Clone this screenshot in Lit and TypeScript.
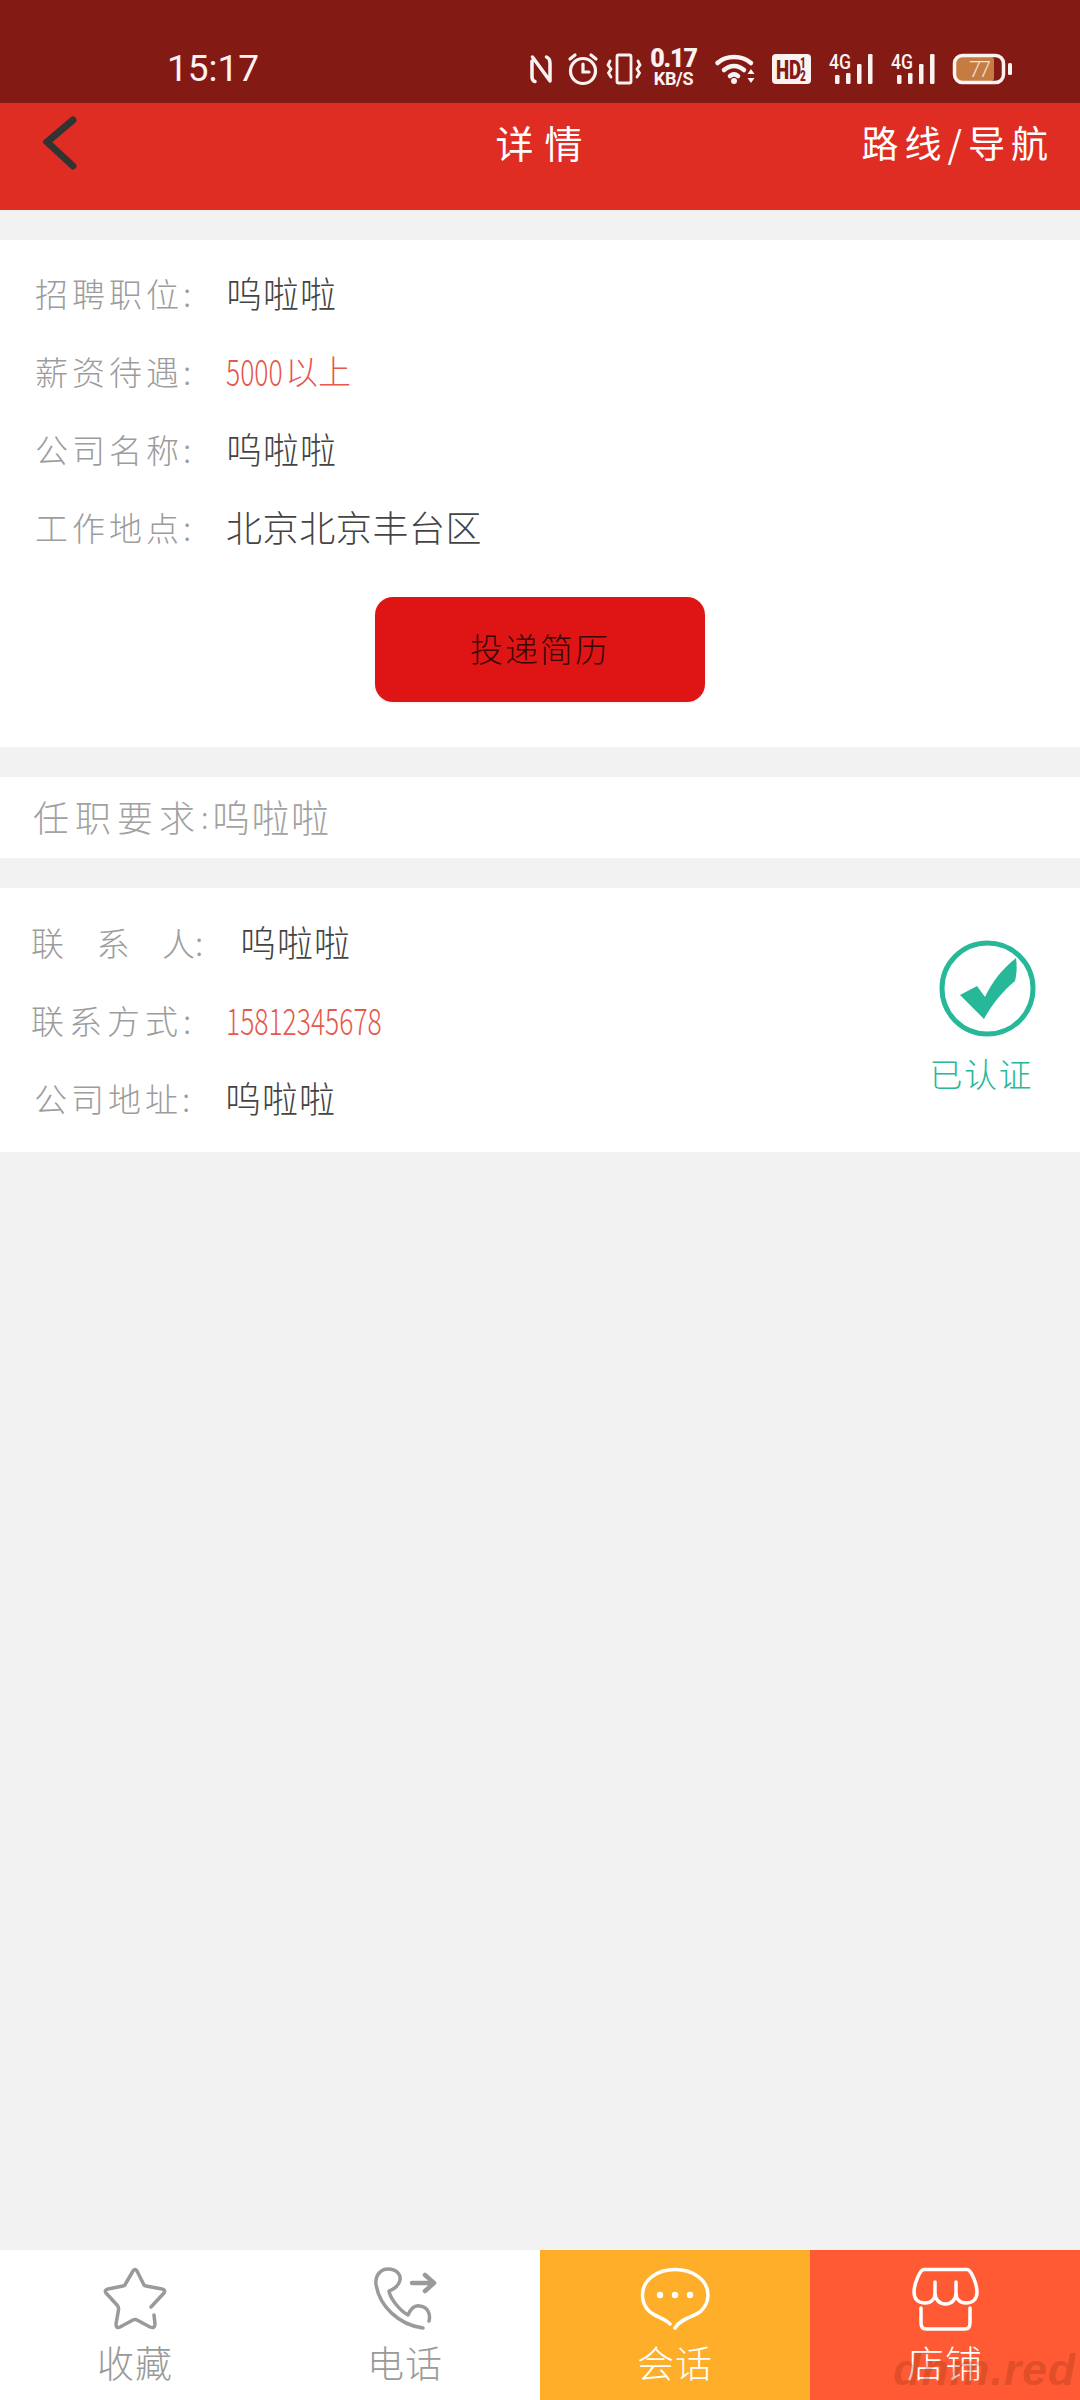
import { LitElement, html, css } from "lit";
import { customElement } from "lit/decorators.js";

@customElement("app-root")
export class AppRoot extends LitElement {
  static styles = css`
    :host { display: block; width: 1080px; height: 2400px; }
    * { box-sizing: border-box; }
    .page {
      width: 1080px; height: 2400px; display: flex; flex-direction: column;
      background: #f2f2f2; position: relative;
      font-family: "Noto Sans CJK SC", "Noto Sans", sans-serif; font-weight: 300;
    }
    .status { height: 103px; background: #841a14; display: flex; align-items: center; padding: 0 68px 0 167px; color: #fbf3f2; flex: none; justify-content: space-between; }
    .time { font: 400 37px/1 Roboto, sans-serif; margin-top: 34px; }
    .sicons { display: flex; align-items: center; margin-top: 34px; }
    .sicons svg { display: block; flex: none; fill: none; stroke: #fbf3f2; overflow: visible; }
    .speed { display: flex; flex-direction: column; align-items: center; width: 43px; margin: 0 21px 0 11px; font-family: Roboto, sans-serif; font-weight: 700; line-height: 1; }
    .speed b { font-size: 25px; line-height: 20px; letter-spacing: -1.1px; }
    .speed span { font-size: 18px; line-height: 18px; letter-spacing: -.3px; margin-top: 1px; }
    .header { height: 107px; background: #e02d23; display: grid; grid-template-columns: 1fr auto 1fr; flex: none; padding-top: 16px; color: #fff; font-size: 38px; line-height: 46px; }
    .back { padding-left: 43px; margin-top: -3px; }
    .back svg { display: block; fill: none; stroke: #333; stroke-width: 7; stroke-linecap: round; stroke-linejoin: miter; }
    .title { letter-spacing: 11px; margin-right: -11px; margin-left: -2px; font-weight: 400; }
    .route { justify-self: end; padding-right: 32px; letter-spacing: 6px; margin-right: -6px; font-size: 37px; white-space: nowrap; font-weight: 400; }
    .card { background: #fff; flex: none; }
    .job { margin-top: 30px; padding: 15px 0 45px 35px; height: 507px; }
    .row { display: flex; height: 78px; align-items: center; white-space: nowrap; padding-bottom: 3px; }
    .label { color: #9c9c9c; font-size: 33px; letter-spacing: 4px; width: 191px; flex: none; }
    .value { color: #444; font-size: 36px; letter-spacing: 1px; margin-bottom: 1px; }
    .wide { letter-spacing: 0.6px; }
    .red { color: #e5584a; display: flex; align-items: center; }
    .digits { display: inline-block; font-size: 36px; letter-spacing: 0; transform: scaleX(.735); transform-origin: left center; }
    .d4 { margin-right: -18px; }
    .cjk { font-size: 33px; letter-spacing: 0; }
    .btnwrap { display: flex; margin-top: 30px; padding-left: 340px; }
    .btn { width: 330px; height: 105px; border-radius: 18px; background: #df1515; color: #3a0505; font-size: 33px; letter-spacing: 2px; display: flex; align-items: center; justify-content: center; padding-bottom: 4px; box-shadow: 0 1px 3px rgba(0,0,0,.08); }
    .req { margin-top: 30px; height: 81px; display: flex; align-items: center; padding: 0 0 4px 33px; color: #a2a2a2; white-space: nowrap; }
    .req .k { font-size: 36px; letter-spacing: 6px; }
    .req .c { font-size: 30px; width: 11px; }
    .req .v { font-size: 38px; letter-spacing: 1.5px; }
    .contact { margin-top: 30px; height: 264px; padding: 16px 47px 14px 31px; display: flex; justify-content: space-between; }
    .contact .label { width: 195px; letter-spacing: 5px; }
    .contact .label.sp { letter-spacing: 0; display: flex; width: 209px; }
    .contact .label.sp span { width: 65.500px; }
    .contact .label.sp span:last-child { width: auto; }
    .contact .label.ad { width: 194px; padding-left: 3px; letter-spacing: 4px; }
    .verify { display: flex; flex-direction: column; align-items: flex-end; padding-top: 36px; color: #26b899; font-size: 33px; line-height: 46px; letter-spacing: 1.500px; white-space: nowrap; }
    .verify svg { display: block; margin: 0 -3px 13px 0; }
    .spacer { flex: 1; }
    .tabs { height: 150px; display: grid; grid-template-columns: repeat(4, 270px); flex: none; background: #fff; }
    .tab { display: flex; flex-direction: column; align-items: center; padding-top: 18px; color: #9a9a9a; font-size: 37px; line-height: 50px; letter-spacing: 1px; }
    .tab.w { color: #fff; }
    .tab svg { display: block; height: 62px; fill: none; stroke: #9a9a9a; stroke-width: 3.500; stroke-linecap: round; stroke-linejoin: round; margin-bottom: 7px; overflow: visible; }
    .tab.w svg { stroke: #fff; }
    .yellow { background: #ffae29; }
    .orange { background: #ff5a33; }
    .mark { position: absolute; left: 893px; bottom: 5px; font: italic 700 45px/50px "Liberation Sans", sans-serif; color: rgba(150, 50, 20, .28); letter-spacing: .8px; }
  `;

  private signal() {
    return html`<svg width="44" height="30" viewBox="0 0 44 30" style="margin-right:18px">
      <text x="0" y="15" font-family="Roboto" font-size="20" font-weight="500" fill="#fbf3f2" stroke="none" textLength="22" lengthAdjust="spacingAndGlyphs">4G</text>
      <g stroke="none" fill="#fbf3f2"><rect x="6" y="21" width="4.500" height="9" rx="1.200"/><rect x="17" y="19" width="4.500" height="11" rx="1.200"/><rect x="28" y="10" width="4.500" height="20" rx="1.200"/><rect x="39" y="0" width="4.500" height="30" rx="1.200"/></g>
    </svg>`;
  }

  render() {
    return html`<div class="page">
      <div class="status">
        <div class="time">15:17</div>
        <div class="sicons">
          <svg width="22" height="28" viewBox="0 0 22 28" stroke-width="3.500" style="margin-right:16px" stroke-linecap="round" stroke-linejoin="round"><path d="M2 6V22C2 24 3 26 5 26.500M2.500 2L20 26V8C20 5 19 3 16.500 2"/></svg>
          <svg width="30" height="32" viewBox="0 0 30 32" stroke-width="3.200" style="margin-right:9px" stroke-linecap="round"><circle cx="15" cy="18" r="12.500"/><path d="M15 11V19H21M2 6L7 2M28 6L23 2"/></svg>
          <svg width="34" height="30" viewBox="0 0 34 30" stroke-width="2.800" style="margin-right:0"><rect x="10" y="1" width="14" height="28" rx="1.500"/><path d="M3 7L1 11L4 15L1.500 19L4 23M31 7L33 11L30 15L32.500 19L30 23" stroke-linecap="round"/></svg>
          <div class="speed"><b>0.17</b><span>KB/S</span></div>
          <svg width="41" height="30" viewBox="0 0 41 30" stroke-width="4.500" style="margin-right:15px" stroke-linecap="round"><path d="M1.500 9C10 1 26 1 35 9M8 16C14 10.500 22 10.500 28 16M14 22C16.500 20 19.500 20 22 22"/><circle cx="18" cy="27" r="3" fill="#fbf3f2" stroke="none"/><path d="M35 15L31.500 20H38.500ZM35 29L31.500 24H38.500Z" fill="#fbf3f2" stroke="none"/></svg>
          <svg width="39" height="30" viewBox="0 0 39 30" style="margin-right:18px"><rect width="39" height="30" rx="4" fill="#fbf3f2" stroke="none"/><text transform="scale(.72 1)" font-family="Roboto" font-weight="900" fill="#841a14" stroke="none"><tspan x="5.500" y="25" font-size="26">HD</tspan><tspan x="39" y="14" font-size="14">1</tspan><tspan x="39" y="27" font-size="14">2</tspan></text></svg>
          ${this.signal()}
          ${this.signal()}
          <svg width="59" height="30" viewBox="0 0 59 30"><rect x="3" y="3" width="38" height="24" fill="#c57c42" stroke="none" rx="3"/><rect x="1.500" y="1.500" width="49" height="27" rx="8" stroke-width="3.500"/><rect x="55" y="9" width="4" height="12" rx="1.500" fill="#fbf3f2" stroke="none"/><text x="16" y="23" font-family="Roboto" font-size="22" font-weight="300" fill="#f3e2d2" stroke="none" textLength="22">77</text></svg>
        </div>
      </div>
      <div class="header">
        <div class="back"><svg width="34" height="54" viewBox="0 0 34 54"><path d="M30 4L4 26L30 50"/></svg></div>
        <div class="title">详情</div>
        <div class="route">路线/导航</div>
      </div>
      <div class="card job">
        <div class="row"><div class="label">招聘职位:</div><div class="value">呜啦啦</div></div>
        <div class="row"><div class="label">薪资待遇:</div><div class="value red"><span class="digits d4">5000</span><span class="cjk">以上</span></div></div>
        <div class="row"><div class="label">公司名称:</div><div class="value">呜啦啦</div></div>
        <div class="row"><div class="label">工作地点:</div><div class="value wide">北京北京丰台区</div></div>
        <div class="btnwrap"><div class="btn">投递简历</div></div>
      </div>
      <div class="card req"><span class="k">任职要求</span><span class="c">:</span><span class="v">呜啦啦</span></div>
      <div class="card contact">
        <div>
          <div class="row"><div class="label sp"><span>联</span><span>系</span><span>人:</span></div><div class="value">呜啦啦</div></div>
          <div class="row"><div class="label">联系方式:</div><div class="value red"><span class="digits">15812345678</span></div></div>
          <div class="row"><div class="label ad">公司地址:</div><div class="value">呜啦啦</div></div>
        </div>
        <div class="verify">
          <svg width="97" height="97" viewBox="0 0 97 97"><circle cx="48.500" cy="48.500" r="45.500" fill="none" stroke="#26b899" stroke-width="5"/><path d="M21 55L38 46L46 57C53 42 63 29 77 18C78 26 78 33 76 41C64 51 53 64 45 79Z" fill="#26b899"/></svg>
          <div>已认证</div>
        </div>
      </div>
      <div class="spacer"></div>
      <div class="tabs">
        <div class="tab"><svg width="62" viewBox="0 0 62 62"><path d="M47 39L60 25Q62 22 58 21L42 18Q40 18 39 15L33 3Q31 0 29 3L22 15Q21 18 19 18L4 21Q0 22 2 25L13 37Q15 39 14.500 42L12 56Q12 61 16 59L29 52Q31 51 33 52L46 59Q51 61 51 56L50 47"/></svg>收藏</div>
        <div class="tab"><svg width="62" viewBox="0 0 62 62"><path d="M49 60C25 57 5 38 2 16C1 6 8 1 14 1C22 1 27 6 26 12C25 18 20 21 15 23C16 30 25 42 34 47C37 40 41 37 46 38C53 39 57 45 55 53"/><path d="M38 15H60M51 7L60 15L51 23" stroke-width="4.500"/></svg>电话</div>
        <div class="tab w yellow"><svg width="69" viewBox="0 0 69 62"><path d="M29 56C24 50 14 49 8 43C3 38 1.500 33 1.500 27C1.500 12 16 1.500 34 1.500C52 1.500 67 12 67 27C67 33 65 38 60 43C54 49 41 49 34 60"/><g fill="#fff" stroke="none"><circle cx="19" cy="27" r="3.200"/><circle cx="34" cy="27" r="3.200"/><circle cx="49" cy="27" r="3.200"/></g></svg>会话</div>
        <div class="tab w orange"><svg width="65" viewBox="0 0 65 62"><path d="M11 1.500H54C58 1.500 64 16 64 24C64 31 60 35 53 35C47 35 43 31 43 25C43 31 39 36 32.500 36C26 36 22 31 22 25C22 31 18 35 12 35C5 35 1 31 1 24C1 16 7 1.500 11 1.500ZM22 14V25M43 14V25M8 40V55C8 59 10 61 13 61H52C55 61 57 59 57 55V40"/></svg>店铺</div>
      </div>
      <div class="mark">dnm.red</div>
    </div>`;
  }
}
